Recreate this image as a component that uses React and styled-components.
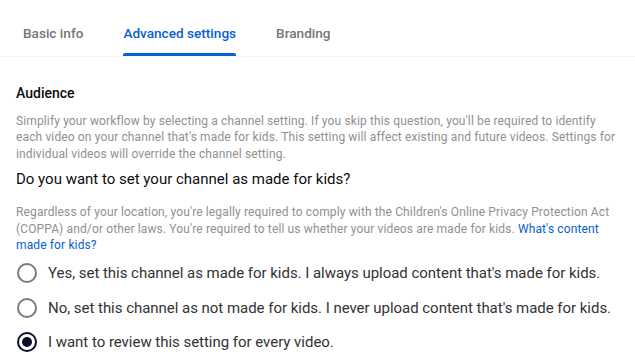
import React, { useState } from 'react'
import styled, { createGlobalStyle } from 'styled-components'

const GlobalStyle = createGlobalStyle`
  body {
    margin: 0;
    background: #fff;
    font-family: Roboto, "Noto Sans", Arial, sans-serif;
  }
`

const TABS = ['Basic info', 'Advanced settings', 'Branding']

const OPTIONS = [
  "Yes, set this channel as made for kids. I always upload content that's made for kids.",
  "No, set this channel as not made for kids. I never upload content that's made for kids.",
  'I want to review this setting for every video.',
]

const App = () => {
  const [tab, setTab] = useState(1)
  const [choice, setChoice] = useState(2)

  return (
    <>
      <GlobalStyle />
      <Page>
        <TabBar>
          {TABS.map((t, i) => (
            <Tab key={t} active={i === tab} onClick={() => setTab(i)}>
              {t}
            </Tab>
          ))}
        </TabBar>
        <Content>
          <SectionTitle>Audience</SectionTitle>
          <Description>
            Simplify your workflow by selecting a channel setting. If you skip this question, you'll be
            required to identify each video on your channel that's made for kids. This setting will
            affect existing and future videos. Settings for individual videos will override the channel
            setting.
          </Description>
          <Question>Do you want to set your channel as made for kids?</Question>
          <Description>
            Regardless of your location, you're legally required to comply with the Children's Online
            Privacy Protection Act (COPPA) and/or other laws. You're required to tell us whether your
            videos are made for kids. <Link href="#">What's content made for kids?</Link>
          </Description>
          <Options>
            {OPTIONS.map((o, i) => (
              <Option key={i} onClick={() => setChoice(i)}>
                <Radio checked={i === choice} />
                <OptionText>{o}</OptionText>
              </Option>
            ))}
          </Options>
        </Content>
      </Page>
    </>
  )
}

export default App

const Page = styled.div`
  width: 635px;
  height: 358px;
  overflow: hidden;
`

const TabBar = styled.div`
  display: flex;
  gap: 40px;
  padding-left: 23px;
  height: 56px;
  border-bottom: 1px solid #f4f4f0;
`

const Tab = styled.div`
  position: relative;
  display: flex;
  align-items: center;
  padding-top: 9px;
  font-size: 13.6px;
  font-weight: 500;
  color: ${(p) => (p.active ? '#065fd4' : '#757575')};
  cursor: pointer;

  &::after {
    content: '';
    display: ${(p) => (p.active ? 'block' : 'none')};
    position: absolute;
    left: 0;
    right: 0;
    bottom: 0;
    height: 3px;
    border-radius: 2px 2px 0 0;
    background: #065fd4;
  }
`

const Content = styled.div`
  padding: 26px 14px 0 16px;
`

const SectionTitle = styled.div`
  font-size: 14px;
  font-weight: 500;
  color: #0d0d0d;
  line-height: 20px;
  margin-bottom: 10px;
`

const Description = styled.div`
  font-size: 12px;
  line-height: 16.4px;
  letter-spacing: 0.13px;
  color: #909090;
`

const Question = styled.div`
  font-size: 15px;
  color: #0d0d0d;
  line-height: 22px;
  margin: 6px 0 14px;
`

const Link = styled.a`
  color: #065fd4;
  text-decoration: none;
`

const Options = styled.div`
  display: flex;
  flex-direction: column;
  gap: 12.5px;
  margin-top: 9px;
`

const Option = styled.div`
  display: flex;
  align-items: center;
  gap: 11px;
  cursor: pointer;
`

const Radio = styled.div`
  box-sizing: border-box;
  width: 20px;
  height: 20px;
  margin-left: 1px;
  border-radius: 50%;
  border: 2px solid ${(p) => (p.checked ? '#0d0d2b' : '#7a7a7a')};
  display: flex;
  align-items: center;
  justify-content: center;

  &::after {
    content: '';
    display: ${(p) => (p.checked ? 'block' : 'none')};
    width: 10px;
    height: 10px;
    border-radius: 50%;
    background: #0d0d2b;
  }
`

const OptionText = styled.div`
  font-size: 15px;
  line-height: 22px;
  letter-spacing: -0.03px;
  color: #333;
`
